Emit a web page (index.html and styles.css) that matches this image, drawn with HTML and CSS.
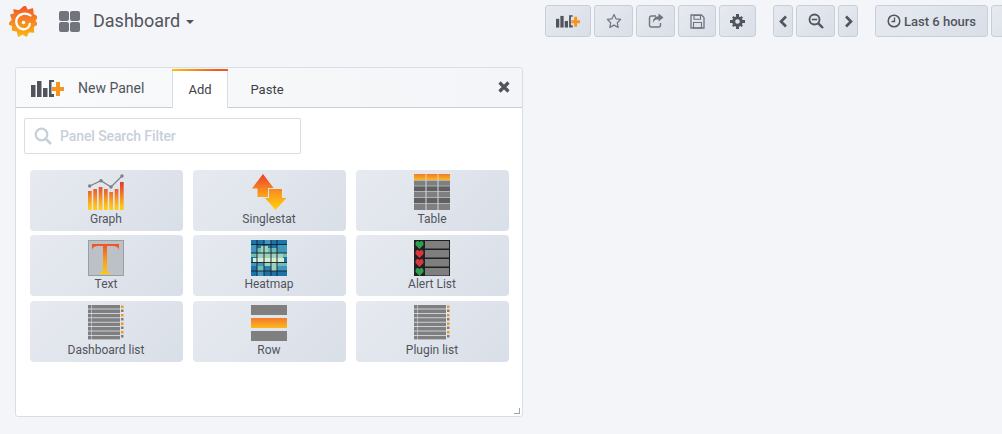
FILE: index.html
```html
<!DOCTYPE html>
<html lang="en">
<head>
    <meta charset="UTF-8">
    <title>Dashboard</title>
    <link rel="stylesheet" href="styles.css">
</head>
<body>
    <svg class="svg-defs" width="0" height="0">
        <defs>
            <linearGradient id="warmV" x1="0" y1="0" x2="0" y2="1">
                <stop offset="0" stop-color="#f4792a"/>
                <stop offset="1" stop-color="#fbb81e"/>
            </linearGradient>
            <linearGradient id="warmUser" gradientUnits="userSpaceOnUse" x1="0" y1="0" x2="0" y2="36">
                <stop offset="0" stop-color="#e8402c"/>
                <stop offset="0.55" stop-color="#fb9a1c"/>
                <stop offset="1" stop-color="#ffd20f"/>
            </linearGradient>
            <linearGradient id="barGrad" gradientUnits="userSpaceOnUse" x1="0" y1="8" x2="0" y2="36">
                <stop offset="0" stop-color="#de3a31"/>
                <stop offset="0.35" stop-color="#ee6a2b"/>
                <stop offset="0.62" stop-color="#f99a1d"/>
                <stop offset="0.85" stop-color="#fdc016"/>
                <stop offset="1" stop-color="#ffcf14"/>
            </linearGradient>
            <linearGradient id="logoGrad" x1="0" y1="0" x2="0" y2="1">
                <stop offset="0" stop-color="#f0592a"/>
                <stop offset="1" stop-color="#fcb316"/>
            </linearGradient>
            <symbol id="addPanel" viewBox="0 0 33 18">
                <rect x="0" y="6" width="4.5" height="12" fill="#52545c"/>
                <rect x="6" y="2" width="4.5" height="16" fill="#52545c"/>
                <rect x="12" y="9" width="4.5" height="9" fill="#52545c"/>
                <path d="M18 18V1h5v2h-2.500v12h2.500v3z" fill="#52545c"/>
                <path d="M25 3h4v5h4v4h-4v5h-4v-5h-4V8h4z" fill="#f7941d"/>
            </symbol>
            <symbol id="listIcon" viewBox="0 0 36 36">
                <g fill="#7f7f7f">
                    <rect x="0" y="0" width="3.500" height="3.600"/><rect x="4" y="0" width="28" height="3.600"/>
                    <rect x="0" y="4.400" width="3.500" height="3.600"/><rect x="4" y="4.400" width="28" height="3.600"/>
                    <rect x="0" y="8.800" width="3.500" height="3.600"/><rect x="4" y="8.800" width="28" height="3.600"/>
                    <rect x="0" y="13.200" width="3.500" height="3.600"/><rect x="4" y="13.200" width="28" height="3.600"/>
                    <rect x="0" y="17.600" width="3.500" height="3.600"/><rect x="4" y="17.600" width="28" height="3.600"/>
                    <rect x="0" y="22" width="3.500" height="3.600"/><rect x="4" y="22" width="28" height="3.600"/>
                    <rect x="0" y="26.400" width="3.500" height="3.600"/><rect x="4" y="26.400" width="28" height="3.600"/>
                    <rect x="0" y="30.800" width="3.500" height="3.600"/><rect x="4" y="30.800" width="28" height="3.600"/>
                    <rect x="33" y="4.500" width="2.500" height="2.500"/><rect x="33" y="13" width="2.500" height="2.500"/>
                    <rect x="33" y="21.500" width="2.500" height="2.500"/><rect x="33" y="30" width="2.500" height="2.500"/>
                </g>
                <g fill="#f7941d">
                    <rect x="33" y="0.500" width="2.500" height="2.500"/><rect x="33" y="9" width="2.500" height="2.500"/>
                    <rect x="33" y="17.500" width="2.500" height="2.500"/><rect x="33" y="26" width="2.500" height="2.500"/>
                </g>
            </symbol>
            <symbol id="heart" viewBox="0 0 8 7">
                <path d="M4 7L.5 3.500V1.200L1.700 0h1.300L4 1l1-1h1.300l1.200 1.200v2.300z"/>
            </symbol>
        </defs>
    </svg>

    <nav class="navbar">
        <svg class="logo" viewBox="0 0 28 31">
            <path d="M16 0l2.500 4.500 5-1.500 .5 5.500 4 2.500-2.500 4 2.500 3-4 2.500 .5 5.500-5-.5-2 4.500-4-2.500-4 2.500-1-5-5-1 .5-4.500L0 18l3.500-4L2 9l4-1 -1-4 5 1z" fill="url(#logoGrad)" stroke="url(#logoGrad)" stroke-width="1.500" stroke-linejoin="round"/>
            <path d="M21.500 9.500C17 6 10 7.500 7.800 12.500 5.800 17.500 9 23 14.300 23.300c3.700.2 6.500-2.400 6.500-5.500" fill="none" stroke="#fff" stroke-width="2.200" stroke-linecap="round"/>
            <circle cx="14.500" cy="16.500" r="1.800" fill="#fff"/>
        </svg>
        <svg class="grid-icon" viewBox="0 0 21 21">
            <rect x="0" y="0" width="10" height="10" rx="2" fill="#71747c"/>
            <rect x="11" y="0" width="10" height="10" rx="2" fill="#71747c"/>
            <rect x="0" y="11" width="10" height="10" rx="2" fill="#71747c"/>
            <rect x="11" y="11" width="10" height="10" rx="2" fill="#71747c"/>
        </svg>
        <span class="dash-title">Dashboard</span>
        <span class="caret"></span>

        <div class="nav-buttons">
            <button class="btn btn-add"><svg width="24" height="14"><use href="#addPanel"/></svg></button>
            <button class="btn btn-md">
                <svg width="16" height="16" viewBox="0 0 16 16"><path d="M8 1.500l2 4.300 4.700.6-3.400 3.300.9 4.700L8 12.100l-4.200 2.300.9-4.700L1.300 6.400 6 5.800z" fill="none" stroke="#71747c" stroke-width="1.200" stroke-linejoin="round"/></svg>
            </button>
            <button class="btn btn-md">
                <svg width="16" height="16" viewBox="0 0 16 16"><path d="M8 3H3.500A2 2 0 0 0 1.500 5v7a2 2 0 0 0 2 2h7a2 2 0 0 0 2-2v-2" fill="none" stroke="#71747c" stroke-width="1.400"/><path d="M10.500 0.500L15.500 4.500 10.500 8.500V6.300C8 6.300 6 7 5 10c-.4-4 1.800-6.500 5.500-6.700z" fill="#71747c"/></svg>
            </button>
            <button class="btn btn-sm">
                <svg width="15" height="15" viewBox="0 0 15 15"><path d="M1 1h10.500L14 3.500V14H1z" fill="none" stroke="#71747c" stroke-width="1.300"/><path d="M4 1.500h6.500v3.800H4z" fill="none" stroke="#71747c" stroke-width="1.100"/><path d="M3.500 8.500h8V14h-8z" fill="none" stroke="#71747c" stroke-width="1.100"/></svg>
            </button>
            <button class="btn btn-gear">
                <svg width="15" height="15" viewBox="0 0 15 15"><circle cx="7.500" cy="7.500" r="3.800" fill="none" stroke="#52545c" stroke-width="3"/><path d="M6 0h3v3H6zM6 12h3v3H6zM0 6h3v3H0zM12 6h3v3h-3z" fill="#52545c"/><path d="M2 3.500L3.500 2l2 2L4 5.500zM13 3.500L11.500 2l-2 2L11 5.500zM2 11.500L3.500 13l2-2L4 9.500zM13 11.500L11.500 13l-2-2L11 9.500z" fill="#52545c"/></svg>
            </button>

            <div class="btn-group">
                <button class="btn btn-arrow">
                    <svg width="9" height="13" viewBox="0 0 9 13"><path d="M7 1.500L2 6.500l5 5" fill="none" stroke="#52545c" stroke-width="2.600"/></svg>
                </button>
                <button class="btn btn-md">
                    <svg width="16" height="16" viewBox="0 0 16 16"><circle cx="6.500" cy="6.500" r="5" fill="none" stroke="#52545c" stroke-width="1.800"/><path d="M10.300 10.300L15 15" stroke="#52545c" stroke-width="2.400"/><path d="M3.800 6.500h5.400" stroke="#52545c" stroke-width="1.600"/></svg>
                </button>
                <button class="btn btn-arrow">
                    <svg width="9" height="13" viewBox="0 0 9 13"><path d="M2 1.500l5 5-5 5" fill="none" stroke="#52545c" stroke-width="2.600"/></svg>
                </button>
            </div>

            <button class="btn btn-time">
                <svg width="14" height="14" viewBox="0 0 14 14"><circle cx="7" cy="7" r="5.800" fill="none" stroke="#52545c" stroke-width="1.500"/><path d="M7.500 3.500v4H4.500" fill="none" stroke="#52545c" stroke-width="1.300"/></svg>
                Last 6 hours
            </button>
            <button class="btn btn-edge"></button>
        </div>
    </nav>

    <main class="content">
        <section class="panel">
            <header class="panel-header">
                <svg class="panel-add-icon" width="33" height="18"><use href="#addPanel"/></svg>
                <span class="panel-title">New Panel</span>
                <span class="tab tab-active">Add</span>
                <span class="tab">Paste</span>
                <svg class="close-icon" width="12" height="12" viewBox="0 0 12 12"><path d="M1.500 1.500l9 9M10.500 1.500l-9 9" stroke="#52545c" stroke-width="3.200"/></svg>
            </header>

            <div class="search-box">
                <svg width="18" height="18" viewBox="0 0 18 18"><circle cx="7.500" cy="7.500" r="5.800" fill="none" stroke="#c7d0d9" stroke-width="2.200"/><path d="M11.800 11.800L17 17" stroke="#c7d0d9" stroke-width="2.600"/></svg>
                <span class="search-text">Panel Search Filter</span>
            </div>

            <div class="card-grid">
                <div class="card">
                    <svg class="card-icon" viewBox="0 0 36 36">
                        <g fill="url(#barGrad)">
                            <rect x="0" y="17" width="3.700" height="19"/>
                            <rect x="5.300" y="15" width="3.700" height="21"/>
                            <rect x="10.700" y="13" width="3.700" height="23"/>
                            <rect x="16" y="15" width="3.700" height="21"/>
                            <rect x="21.300" y="18" width="3.700" height="18"/>
                            <rect x="26.700" y="15" width="3.700" height="21"/>
                            <rect x="32" y="8" width="3.700" height="28"/>
                        </g>
                        <path d="M1.700 12L13 6.700 23 13 34 2" fill="none" stroke="#7f7f7f" stroke-width="1.200"/>
                        <g fill="#7f7f7f"><circle cx="1.700" cy="12" r="1.700"/><circle cx="13" cy="6.700" r="1.700"/><circle cx="23" cy="13" r="1.700"/><circle cx="34" cy="2" r="1.700"/></g>
                    </svg>
                    <span class="card-label">Graph</span>
                </div>
                <div class="card">
                    <svg class="card-icon" viewBox="0 0 36 36">
                        <path d="M12 0L23 14.500H17.500V23H6.500V14.500H1z" fill="url(#warmUser)"/>
                        <path d="M17 14h15v9.500h4L24.500 36.500 13 23.500h4z" fill="#e2e6ed"/>
                        <path d="M18 15h13v9h4.500L24.500 36 14 24h4z" fill="url(#warmUser)"/>
                    </svg>
                    <span class="card-label">Singlestat</span>
                </div>
                <div class="card">
                    <svg class="card-icon" viewBox="0 0 36 36">
                        <rect x="0" y="0" width="36" height="6" fill="url(#warmV)"/>
                        <rect x="0" y="6" width="36" height="30" fill="#7f7f7f"/>
                        <rect x="0" y="12" width="36" height="5" fill="#606060"/>
                        <rect x="0" y="24" width="36" height="5" fill="#606060"/>
                        <path d="M0 6.500h36M0 12h36M0 17.500h36M0 23.500h36M0 29.500h36" stroke="#c3c7cd" stroke-width=".7"/>
                        <path d="M12 0v36M24 0v36" stroke="#d5d8dd" stroke-width="1"/>
                    </svg>
                    <span class="card-label">Table</span>
                </div>
                <div class="card">
                    <svg class="card-icon" viewBox="0 0 36 36">
                        <rect x=".5" y=".5" width="35" height="35" fill="#bcc1c8" stroke="#9a9ea4"/>
                        <path d="M4 4H31L31 10C30 7 28 6 25 6H19V31.500L23 33.500V34H11V33.500L15 31.500V6H10C7 6 5 7 4 10Z" fill="url(#warmUser)"/>
                    </svg>
                    <span class="card-label">Text</span>
                </div>
                <div class="card">
                    <svg class="card-icon" viewBox="0 0 36 36">
                        <rect width="36" height="36" fill="#1e73a8"/>
                        <g fill="#3f97bd">
                            <rect x="0" y="4" width="6" height="9"/><rect x="13" y="0" width="7" height="4"/><rect x="26" y="4" width="10" height="9"/>
                            <rect x="0" y="22" width="13" height="4"/><rect x="26" y="26" width="10" height="5"/><rect x="6" y="31" width="7" height="5"/>
                        </g>
                        <g fill="#6fbdb5">
                            <rect x="6" y="8" width="20" height="5"/><rect x="0" y="13" width="36" height="4"/>
                            <rect x="20" y="22" width="16" height="4"/><rect x="6" y="26" width="7" height="5"/><rect x="20" y="26" width="6" height="5"/>
                        </g>
                        <g fill="#9bd4b8">
                            <rect x="10" y="6" width="7" height="7"/><rect x="6" y="13" width="26" height="9"/><rect x="13" y="22" width="13" height="9"/>
                        </g>
                        <g fill="#dcecd2">
                            <rect x="2" y="18" width="11" height="4"/><rect x="13" y="18" width="20" height="4"/>
                        </g>
                        <rect x="13" y="26" width="7" height="5" fill="#2a7fb0"/>
                        <path d="M0 4.500h36M0 13h36M0 22.500h36M0 31h36M6 0v36M13 0v36M20 0v36M26 0v36" stroke="#14202b" stroke-width=".9"/>
                    </svg>
                    <span class="card-label">Heatmap</span>
                </div>
                <div class="card">
                    <svg class="card-icon" viewBox="0 0 36 36">
                        <rect width="36" height="36" fill="#1f2023"/>
                        <g fill="#7f7f7f">
                            <rect x="11" y="1" width="24" height="7.500"/><rect x="11" y="10" width="24" height="7.500"/>
                            <rect x="11" y="19" width="24" height="7.500"/><rect x="11" y="28" width="24" height="7.500"/>
                        </g>
                        <use href="#heart" x="1" y="1" width="9" height="8" fill="#2f9e4f"/>
                        <use href="#heart" x="1" y="10" width="9" height="8" fill="#d8363c"/>
                        <use href="#heart" x="1" y="19" width="9" height="8" fill="#d8363c"/>
                        <use href="#heart" x="1" y="28" width="9" height="8" fill="#2f9e4f"/>
                    </svg>
                    <span class="card-label">Alert List</span>
                </div>
                <div class="card">
                    <svg class="card-icon"><use href="#listIcon"/></svg>
                    <span class="card-label">Dashboard list</span>
                </div>
                <div class="card">
                    <svg class="card-icon" viewBox="0 0 36 36">
                        <rect x="0" y="0" width="36" height="10" fill="#7f7f7f"/>
                        <rect x="0" y="13" width="36" height="10" fill="url(#warmV)"/>
                        <rect x="0" y="26" width="36" height="10" fill="#7f7f7f"/>
                    </svg>
                    <span class="card-label">Row</span>
                </div>
                <div class="card">
                    <svg class="card-icon"><use href="#listIcon"/></svg>
                    <span class="card-label">Plugin list</span>
                </div>
            </div>

            <span class="resize-handle"></span>
        </section>
    </main>
</body>
</html>
```

FILE: styles.css
```css
html, body {
    height: 100%;
}
body {
    margin: 0;
    background: #f4f5f8;
    color: #52545c;
    font-family: Roboto, "Liberation Sans", sans-serif;
    overflow: hidden;
}
.svg-defs {
    display: block;
    height: 0;
}
button {
    font-family: inherit;
}

/* top bar */
.navbar {
    display: flex;
    align-items: flex-start;
    height: 67px;
    box-sizing: border-box;
    padding: 5px 0 0 9px;
}
.logo {
    width: 28px;
    height: 31px;
    margin-top: 1px;
    flex-shrink: 0;
}
.grid-icon {
    width: 21px;
    height: 21px;
    margin: 6px 0 0 22px;
    flex-shrink: 0;
}
.dash-title {
    margin-left: 13px;
    font-size: 18px;
    line-height: 32px;
    color: #52545c;
}
.caret {
    width: 0;
    height: 0;
    margin: 15px 0 0 6px;
    border-left: 4px solid transparent;
    border-right: 4px solid transparent;
    border-top: 4px solid #52545c;
}
.nav-buttons {
    display: flex;
    margin-left: 351px;
    gap: 3px;
    flex-shrink: 0;
}
.btn {
    display: flex;
    align-items: center;
    justify-content: center;
    gap: 3px;
    height: 32px;
    box-sizing: border-box;
    padding: 0;
    border: 1px solid #c7d0d9;
    border-radius: 3px;
    background: linear-gradient(135deg, #e7eaf0, #d9dfe8);
    color: #52545c;
    flex-shrink: 0;
}
.btn-add { width: 46px; }
.btn-md { width: 39px; }
.btn-sm { width: 38px; }
.btn-gear { width: 37px; }
.btn-arrow { width: 20px; }
.btn-time {
    width: 113px;
    margin-left: 14px;
    font-size: 13px;
    font-weight: 500;
}
.btn-edge { width: 40px; }
.btn-group {
    display: flex;
    gap: 3px;
    margin-left: 14px;
}

/* panel */
.content {
    padding-left: 15px;
}
.panel {
    position: relative;
    width: 508px;
    height: 350px;
    box-sizing: border-box;
    background: #fff;
    border: 1px solid #d8dee6;
    border-radius: 3px;
}
.panel-header {
    display: flex;
    align-items: flex-end;
    height: 40px;
    box-sizing: border-box;
    background: linear-gradient(90deg, #f9fafb, #f4f5f8);
    border-bottom: 1px solid #c7d0d9;
    border-radius: 3px 3px 0 0;
}
.panel-add-icon {
    align-self: center;
    margin-left: 15px;
    flex-shrink: 0;
}
.panel-title {
    align-self: center;
    width: 94px;
    margin-left: 14px;
    font-size: 14px;
    color: #52545c;
}
.tab {
    display: flex;
    align-items: center;
    justify-content: center;
    height: 38px;
    box-sizing: border-box;
    padding-top: 2px;
    font-size: 13px;
    color: #3e4047;
}
.tab:last-of-type {
    width: 78px;
}
.tab-active {
    width: 56px;
    height: 39px;
    margin-bottom: -1px;
    background: #fff;
    border: 1px solid #d8dee6;
    border-top: 0;
    border-bottom: 0;
    position: relative;
}
.tab-active::before {
    content: "";
    position: absolute;
    left: -1px;
    right: -1px;
    top: 0;
    height: 2px;
    background: linear-gradient(90deg, #ffc107, #f05a28 80%);
}
.close-icon {
    align-self: center;
    margin: 0 12px 2px auto;
}
.search-box {
    display: flex;
    align-items: center;
    gap: 8px;
    width: 277px;
    height: 36px;
    box-sizing: border-box;
    margin: 10px 0 0 8px;
    padding-left: 9px;
    border: 1px solid #d8dee6;
    border-radius: 2px;
}
.search-text {
    font-size: 14px;
    font-weight: 500;
    letter-spacing: -0.1px;
    color: #c7d0d9;
}
.card-grid {
    display: grid;
    grid-template-columns: repeat(3, 153px);
    grid-auto-rows: 61px;
    column-gap: 10px;
    row-gap: 4.400px;
    margin: 16px 0 0 14px;
}
.card {
    display: flex;
    flex-direction: column;
    align-items: center;
    box-sizing: border-box;
    padding: 4.400px 1px 0 0;
    border-radius: 4px;
    background: linear-gradient(135deg, #e7eaf0, #d9dfe8);
}
.card-icon {
    width: 36px;
    height: 36px;
    flex-shrink: 0;
}
.card-label {
    margin-top: 1.600px;
    font-size: 12px;
    line-height: 14px;
    color: #52545c;
}
.resize-handle {
    position: absolute;
    right: 2px;
    bottom: 2px;
    width: 5px;
    height: 5px;
    border-right: 1px solid #9aa2ab;
    border-bottom: 1px solid #9aa2ab;
}
```
